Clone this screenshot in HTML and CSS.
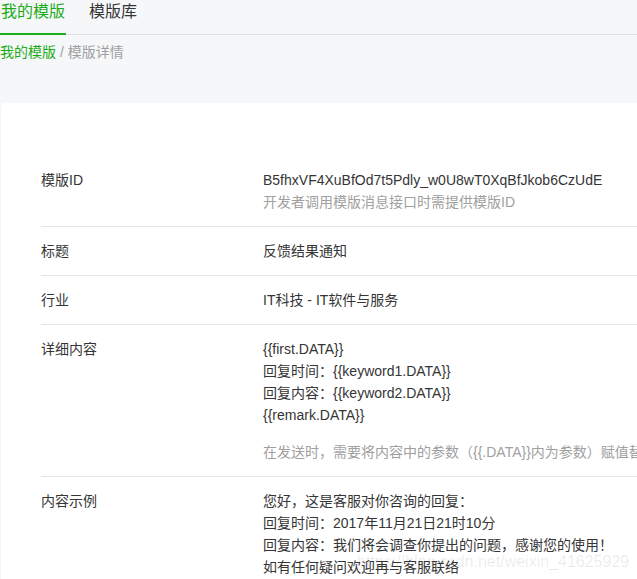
FILE: index.html
```html
<!DOCTYPE html>
<html lang="zh-CN">
<head>
<meta charset="utf-8">
<title>模版详情</title>
<link rel="stylesheet" href="styles.css">
</head>
<body>
<div class="page">
  <nav class="tabs">
    <a class="tab active">我的模版</a>
    <a class="tab">模版库</a>
  </nav>
  <div class="crumbs"><span class="crumb-link">我的模版</span><span class="crumb-sep"> / </span><span class="crumb-cur">模版详情</span></div>
  <section class="card">
    <div class="row">
      <div class="label">模版ID</div>
      <div class="value">
        <div>B5fhxVF4XuBfOd7t5Pdly_w0U8wT0XqBfJkob6CzUdE</div>
        <div class="hint">开发者调用模版消息接口时需提供模版ID</div>
      </div>
    </div>
    <div class="row">
      <div class="label">标题</div>
      <div class="value">反馈结果通知</div>
    </div>
    <div class="row">
      <div class="label">行业</div>
      <div class="value">IT科技 - IT软件与服务</div>
    </div>
    <div class="row">
      <div class="label">详细内容</div>
      <div class="value">
        <div>{{first.DATA}}</div>
        <div>回复时间：{{keyword1.DATA}}</div>
        <div>回复内容：{{keyword2.DATA}}</div>
        <div>{{remark.DATA}}</div>
        <div class="hint hint-gap">在发送时，需要将内容中的参数（{{.DATA}}内为参数）赋值替换后才可以发送</div>
      </div>
    </div>
    <div class="row last">
      <div class="label">内容示例</div>
      <div class="value">
        <div>您好，这是客服对你咨询的回复：</div>
        <div>回复时间：2017年11月21日21时10分</div>
        <div>回复内容：我们将会调查你提出的问题，感谢您的使用！</div>
        <div>如有任何疑问欢迎再与客服联络</div>
      </div>
    </div>
  </section>
  <div class="watermark">https://blog.csdn.net/weixin_41625929</div>
</div>
</body>
</html>
```

FILE: styles.css
```css
html, body {
  margin: 0;
  padding: 0;
  overflow: hidden;
}
body {
  font-family: "Liberation Sans", "Noto Sans CJK SC", sans-serif;
  color: #353535;
  background: #f6f7f9;
}
.page {
  position: relative;
  min-height: 579px;
  background: #f6f7f9;
}
.tabs {
  display: flex;
  gap: 22px;
  border-bottom: 1px solid #dfe0e3;
}
.tab {
  display: block;
  height: 33px;
  font-size: 16px;
  line-height: 24px;
  color: #353535;
  padding: 0 1px;
}
.tab.active {
  color: #1aad19;
  border-bottom: 2px solid #1aad19;
  margin-bottom: -1px;
}
.crumbs {
  padding-top: 7px;
  font-size: 14px;
  line-height: 20px;
  color: #a0a0a0;
}
.crumb-link {
  color: #1aad19;
}
.card {
  margin: 41px 0 0 1px;
  background: #fff;
  border-radius: 4px 0 0 0;
  padding: 53px 0 0 40px;
  min-height: 500px;
}
.row {
  display: flex;
  padding: 13px 0;
  font-size: 14px;
  line-height: 22px;
  border-bottom: 1px solid #e5e5e5;
}
.row.last {
  border-bottom: none;
}
.label {
  width: 222px;
  flex: none;
}
.value {
  flex: 1;
  white-space: nowrap;
}
.hint {
  color: #a0a0a0;
}
.hint-gap {
  margin-top: 15px;
}
.watermark {
  position: absolute;
  left: 357px;
  top: 552px;
  font-size: 16px;
  line-height: 20px;
  color: rgba(0, 0, 0, 0.09);
  white-space: nowrap;
}
```
